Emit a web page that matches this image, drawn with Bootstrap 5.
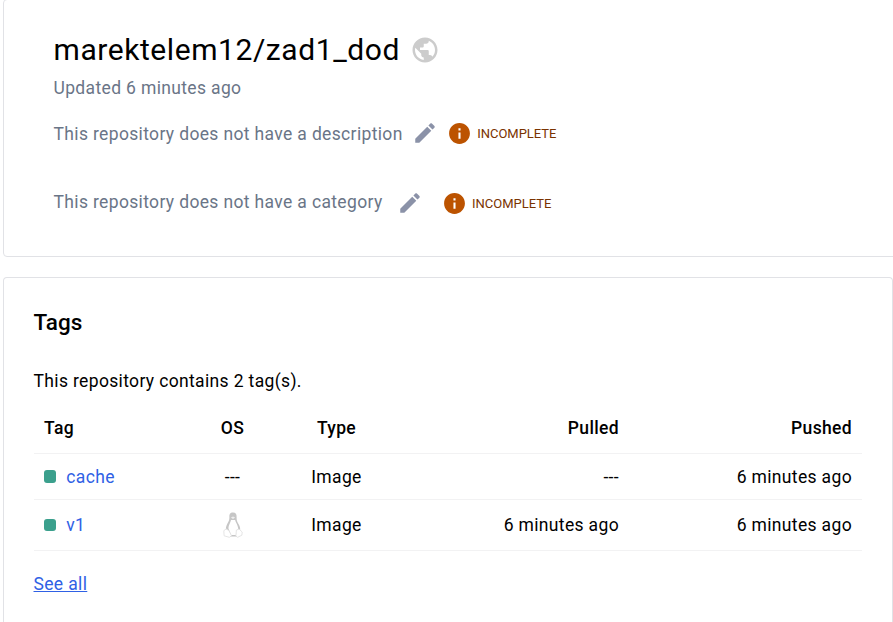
<!DOCTYPE html>
<html lang="en">
<head>
<meta charset="utf-8">
<meta name="viewport" content="width=device-width, initial-scale=1">
<title>marektelem12/zad1_dod</title>
<link href="https://cdn.jsdelivr.net/npm/bootstrap@5.3.0/dist/css/bootstrap.min.css" rel="stylesheet">
<style>
  body { font-family: Roboto, "Liberation Sans", sans-serif; font-size: 17.5px; line-height: 25px; letter-spacing: .35px; color: #000; background: #fff; overflow: hidden; height: 622px; }
  .page { padding-left: 3px; gap: 20px; height: 622px; overflow: hidden; }
  .panel { border: 1px solid #e1e2e6; border-radius: 4px; background: #fff; }
  .summary { width: 920px; height: 258px; margin-top: -1px; padding: 30px 49.5px 0; }
  .tags-panel { width: 890px; height: 345px; padding: 28px 30px 0; border-bottom: 0; border-bottom-left-radius: 0; border-bottom-right-radius: 0; }
  .repo-name { font-size: 30px; line-height: 40px; letter-spacing: .57px; font-weight: 400; }
  .muted { color: #6a7587; }
  .status { font-size: 13px; line-height: 20px; letter-spacing: -.02px; color: #7a3300; padding-top: 2px; margin-left: 5.500px; }
  .line { height: 26px; }
  .updated { margin-top: 6px; }
  .description { margin-top: 19px; }
  .description .muted { padding-top: 2px; }
  .category { margin-top: 44px; }
  .category .muted { margin-top: -2px; }
  .globe { margin-left: 10px; }
  .description .pencil { margin-left: 9px; }
  .description .info { margin-left: 9px; }
  .category .pencil { margin-left: 14px; }
  .category .info { margin-left: 19px; }
  .heading { font-size: 22.5px; line-height: 32px; font-weight: 500; letter-spacing: 0; margin-left: -.5px; }
  .intro { margin: 31px 0 8px -.5px; }
  .tag-table { table-layout: fixed; width: 828px; letter-spacing: inherit; }
  .tag-table > :not(caption) > * > * { padding: 2px 10px 0; border-bottom: 1px solid #f2f2f3; color: #000; vertical-align: middle; }
  .tag-table th { font-weight: 500; height: 51px; }
  .tag-table .r1 td { height: 46px; }
  .tag-table .r2 td { height: 51px; }
  .c-tag { width: 151px; } .c-os { width: 95px; } .c-type { width: 113px; } .c-pulled { width: 236px; } .c-pushed { width: 233px; }
  .dot { width: 12px; height: 12px; border-radius: 3px; background: #3ba08d; margin-right: 10.300px; margin-bottom: 2px; }
  .r1 .dot { height: 13px; }
  .tag-table .os-icon { padding-top: 0 !important; }
  .tlink { color: #2f61e5; }
  .see-all { margin: 21px 0 0 -.5px; }
  svg { display: block; flex: none; }
</style>
</head>
<body>
<main class="page d-flex flex-column">
  <section class="panel summary flex-shrink-0">
    <div class="d-flex align-items-center">
      <h1 class="repo-name mb-0">marektelem12/zad1_dod</h1>
      <svg class="globe" width="30" height="30" viewBox="0 0 24 24" fill="#ccc"><path d="M12 2C6.48 2 2 6.48 2 12s4.480 10 10 10 10-4.480 10-10S17.520 2 12 2zm-1 17.930c-3.950-.49-7-3.850-7-7.930 0-.62.080-1.210.210-1.790L9 15v1c0 1.100.9 2 2 2v1.930zm6.900-2.540c-.26-.81-1-1.390-1.900-1.390h-1v-3c0-.55-.45-1-1-1H8v-2h2c.55 0 1-.45 1-1V7h2c1.100 0 2-.9 2-2v-.41c2.930 1.190 5 4.060 5 7.410 0 2.080-.8 3.970-2.100 5.390z"/></svg>
    </div>
    <div class="muted updated">Updated 6 minutes ago</div>
    <div class="line description d-flex align-items-center">
      <span class="muted">This repository does not have a description</span>
      <svg class="pencil" width="26" height="26" viewBox="0 0 24 24" fill="#8b92a8"><path d="M3 17.250V21h3.750L17.810 9.940l-3.750-3.750L3 17.250zM20.710 7.040c.39-.39.39-1.020 0-1.410l-2.340-2.340c-.39-.39-1.020-.39-1.410 0l-1.830 1.830 3.750 3.750 1.830-1.830z"/></svg>
      <svg class="info" width="25" height="25" viewBox="0 0 24 24" fill="#bc5300"><path d="M12 2C6.480 2 2 6.480 2 12s4.480 10 10 10 10-4.480 10-10S17.520 2 12 2zm1 15h-2v-6h2v6zm0-8h-2V7h2v2z"/></svg>
      <span class="status">INCOMPLETE</span>
    </div>
    <div class="line category d-flex align-items-center">
      <span class="muted">This repository does not have a category</span>
      <svg class="pencil" width="26" height="26" viewBox="0 0 24 24" fill="#8b92a8"><path d="M3 17.250V21h3.750L17.810 9.940l-3.750-3.750L3 17.250zM20.710 7.040c.39-.39.39-1.020 0-1.410l-2.340-2.340c-.39-.39-1.020-.39-1.410 0l-1.830 1.830 3.750 3.750 1.830-1.830z"/></svg>
      <svg class="info" width="25" height="25" viewBox="0 0 24 24" fill="#bc5300"><path d="M12 2C6.480 2 2 6.480 2 12s4.480 10 10 10 10-4.480 10-10S17.520 2 12 2zm1 15h-2v-6h2v6zm0-8h-2V7h2v2z"/></svg>
      <span class="status">INCOMPLETE</span>
    </div>
  </section>
  <section class="panel tags-panel flex-shrink-0">
    <h2 class="heading mb-0">Tags</h2>
    <p class="intro">This repository contains 2 tag(s).</p>
    <table class="table tag-table mb-0">
      <colgroup><col class="c-tag"><col class="c-os"><col class="c-type"><col class="c-pulled"><col class="c-pushed"></colgroup>
      <thead><tr><th>Tag</th><th class="text-center">OS</th><th class="text-center">Type</th><th class="text-end">Pulled</th><th class="text-end">Pushed</th></tr></thead>
      <tbody>
        <tr class="r1"><td><div class="d-flex align-items-center"><span class="dot"></span><a href="#" class="tlink text-decoration-none">cache</a></div></td><td class="text-center">---</td><td class="text-center">Image</td><td class="text-end">---</td><td class="text-end">6 minutes ago</td></tr>
        <tr class="r2"><td><div class="d-flex align-items-center"><span class="dot"></span><a href="#" class="tlink text-decoration-none">v1</a></div></td>
          <td class="os-icon"><svg class="mx-auto" width="20" height="26" viewBox="0 0 20 26"><path d="M10 .5C7 .5 6.200 2.500 6.400 5c.1 3-.8 4.500-2.200 7C3 14.500 2.700 16 3 18l3 6.500h8l3.100-6.500c.3-2-.4-3.800-1.600-6-1.500-2.600-2-4-1.900-7 .1-2.800-.8-4.500-3.600-4.500z" fill="#c6c6c6"/><path d="M8 8c-.5 3-2.500 5-2.600 8.300L8 23h5l2.200-6.700C14.800 13 12.700 10.500 12.100 8z" fill="#fff"/><path d="M7.900 5.500 10 4.600l2.100.9-2.100 1.500z" fill="#eee"/><path d="M3.300 17 .8 18.600l.3 5.200 5.300 1.500 2.100-1.600-2.600-5.200zM16 17l3.200 3-.3 3.200-4.300 2.100-1.700-1.200.5-6z" fill="#fff" stroke="#dedede" stroke-width=".8" stroke-linejoin="round"/></svg></td>
          <td class="text-center">Image</td><td class="text-end">6 minutes ago</td><td class="text-end">6 minutes ago</td></tr>
      </tbody>
    </table>
    <div class="see-all"><a href="#" class="tlink">See all</a></div>
  </section>
</main>
<script src="https://cdn.jsdelivr.net/npm/bootstrap@5.3.0/dist/js/bootstrap.bundle.min.js"></script>
</body>
</html>
